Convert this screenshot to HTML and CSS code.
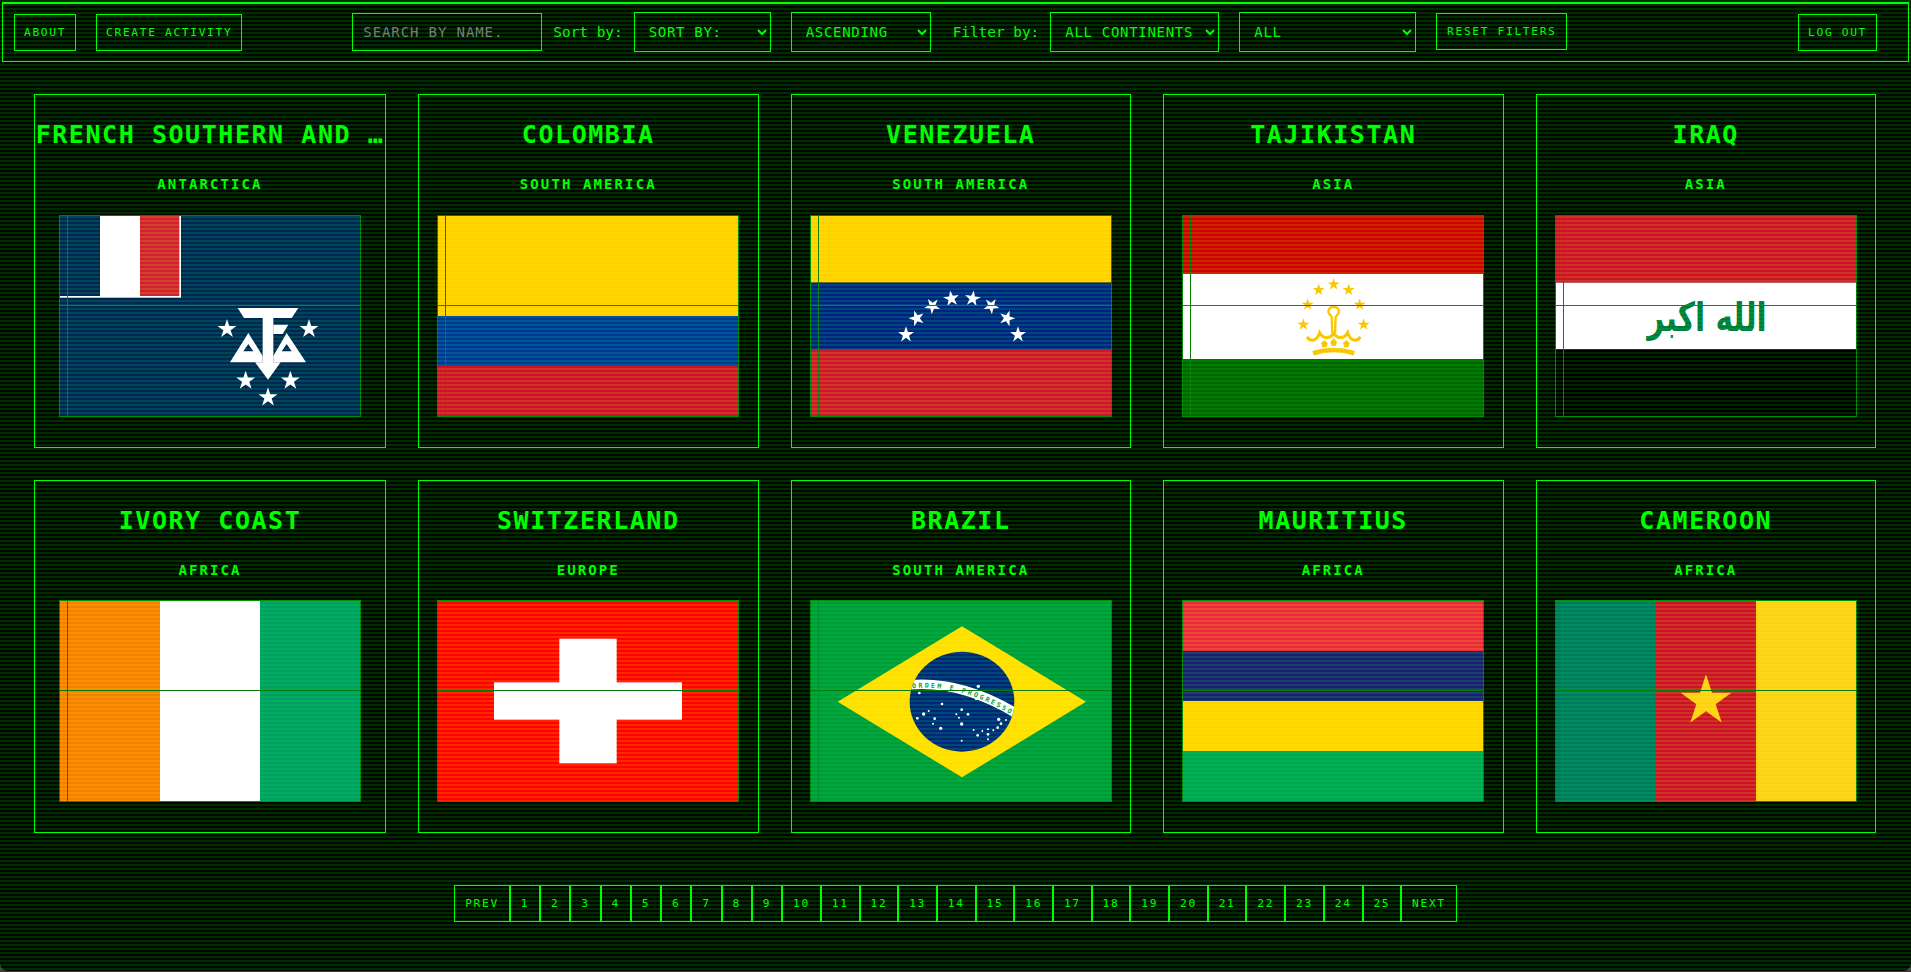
FILE: index.html
```html
<!DOCTYPE html>
<html lang="en">
<head>
<meta charset="utf-8">
<title>Countries</title>
<link rel="stylesheet" href="styles.css">
</head>
<body>
<svg class="defs" width="0" height="0" aria-hidden="true"><defs><polygon id="star" points="0,-1 .225,-.309 .951,-.309 .363,.118 .588,.809 0,.382 -.588,.809 -.363,.118 -.951,-.309 -.225,-.309"/></defs></svg>
<header class="topbar">
  <div class="group group-left">
    <button class="btn btn-nav">ABOUT</button>
    <button class="btn btn-nav">CREATE ACTIVITY</button>
  </div>
  <div class="group group-center">
    <input class="search" type="text" placeholder="SEARCH BY NAME.">
    <label class="lbl">Sort by:</label>
    <select class="sel sel-sort"><option>SORT BY:</option></select>
    <select class="sel sel-order"><option>ASCENDING</option></select>
    <label class="lbl lbl-filter">Filter by:</label>
    <select class="sel sel-cont"><option>ALL CONTINENTS</option></select>
    <select class="sel sel-act"><option>ALL</option></select>
    <button class="btn btn-reset">RESET FILTERS</button>
  </div>
  <button class="btn btn-nav btn-logout">LOG OUT</button>
</header>

<main class="grid">
  <article class="card">
    <h2 class="name">FRENCH SOUTHERN AND …</h2>
    <p class="continent">ANTARCTICA</p>
    <div class="flag"><svg viewBox="0 0 900 600" preserveAspectRatio="none">
      <rect width="900" height="600" fill="#002654"/>
      <rect width="363" height="245" fill="#fff"/>
      <rect width="120" height="240" fill="#002654"/>
      <rect x="120" width="120" height="240" fill="#fff"/>
      <rect x="240" width="118" height="240" fill="#d2202e"/>
      <g fill="#fff">
        <polygon points="533,276 715,276 695,306 552,306"/>
        <rect x="608" y="306" width="32" height="140"/>
        <polygon points="640,326 685,326 668,354 640,354"/>
        <path fill-rule="evenodd" d="M565 351 L510 439 H608 V420 Z M565 384 L550 406 H580 Z"/>
        <path fill-rule="evenodd" d="M680 351 L738 439 H640 V420 Z M680 384 L665 406 H695 Z"/>
        <polygon points="585,439 662,439 624,491"/>
        <use href="#star" transform="translate(501 339) scale(30)"/>
        <use href="#star" transform="translate(747 339) scale(30)"/>
        <use href="#star" transform="translate(557 494) scale(30)"/>
        <use href="#star" transform="translate(691 494) scale(30)"/>
        <use href="#star" transform="translate(624 544) scale(30)"/>
      </g>
    </svg></div>
  </article>

  <article class="card">
    <h2 class="name">COLOMBIA</h2>
    <p class="continent">SOUTH AMERICA</p>
    <div class="flag"><svg viewBox="0 0 900 600" preserveAspectRatio="none">
      <rect width="900" height="300" fill="#ffd100"/>
      <rect y="300" width="900" height="150" fill="#003893"/>
      <rect y="450" width="900" height="150" fill="#ce1126"/>
    </svg></div>
  </article>

  <article class="card">
    <h2 class="name">VENEZUELA</h2>
    <p class="continent">SOUTH AMERICA</p>
    <div class="flag"><svg viewBox="0 0 900 600" preserveAspectRatio="none">
      <rect width="900" height="200" fill="#ffd100"/>
      <rect y="200" width="900" height="200" fill="#00247d"/>
      <rect y="400" width="900" height="200" fill="#cf142b"/>
      <g fill="#fff">
        <use href="#star" transform="translate(285 356) scale(25)"/>
        <use href="#star" transform="translate(317 307) rotate(-18) scale(25)"/>
        <use href="#star" transform="translate(364 270) rotate(-32) scale(25)"/>
        <use href="#star" transform="translate(421 248) rotate(-8) scale(25)"/>
        <use href="#star" transform="translate(485 248) rotate(8) scale(25)"/>
        <use href="#star" transform="translate(541 270) rotate(32) scale(25)"/>
        <use href="#star" transform="translate(588 307) rotate(18) scale(25)"/>
        <use href="#star" transform="translate(621 356) scale(25)"/>
      </g>
    </svg></div>
  </article>

  <article class="card">
    <h2 class="name">TAJIKISTAN</h2>
    <p class="continent">ASIA</p>
    <div class="flag"><svg viewBox="0 0 900 600" preserveAspectRatio="none">
      <rect width="900" height="174" fill="#cc0000"/>
      <rect y="174" width="900" height="256" fill="#fff"/>
      <rect y="430" width="900" height="170" fill="#006600"/>
      <g fill="#f8c300">
        <use href="#star" transform="translate(452 205) scale(19)"/>
        <use href="#star" transform="translate(407 222) scale(19)"/>
        <use href="#star" transform="translate(497 222) scale(19)"/>
        <use href="#star" transform="translate(374 266) scale(19)"/>
        <use href="#star" transform="translate(530 266) scale(19)"/>
        <use href="#star" transform="translate(361 326) scale(19)"/>
        <use href="#star" transform="translate(542 326) scale(19)"/>
        <path d="M414 382 l10 -10 l10 10 l-4 12 h-12 Z"/>
        <path d="M452 366 l10 12 l-4 12 h-12 l-4 -12 Z"/>
        <path d="M480 382 l10 -10 l10 10 l-4 12 h-12 Z"/>
      </g>
      <g fill="none" stroke="#f8c300">
        <path stroke-width="7" d="M436 288 C433 268 471 268 468 288 C466 296 460 298 458 303 L456 354 H448 L446 303 C444 298 438 296 436 288 Z"/>
        <path stroke-width="9" d="M372 362 C384 382 404 372 410 350 C420 368 440 370 452 352 C464 370 484 368 494 350 C500 372 520 382 532 362"/>
        <path stroke-width="14" d="M390 412 Q452 392 514 412"/>
      </g>
    </svg></div>
  </article>

  <article class="card">
    <h2 class="name">IRAQ</h2>
    <p class="continent">ASIA</p>
    <div class="flag"><svg viewBox="0 0 900 600" preserveAspectRatio="none">
      <rect width="900" height="200" fill="#ce1126"/>
      <rect y="200" width="900" height="200" fill="#fff"/>
      <rect y="400" width="900" height="200" fill="#000"/>
      <text class="takbir" x="453" y="344" textLength="358" lengthAdjust="spacingAndGlyphs" text-anchor="middle" direction="rtl">الله اكبر</text>
    </svg></div>
  </article>

  <article class="card">
    <h2 class="name">IVORY COAST</h2>
    <p class="continent">AFRICA</p>
    <div class="flag"><svg viewBox="0 0 900 600" preserveAspectRatio="none">
      <rect width="300" height="600" fill="#f77f00"/>
      <rect x="300" width="300" height="600" fill="#fff"/>
      <rect x="600" width="300" height="600" fill="#009e60"/>
    </svg></div>
  </article>

  <article class="card">
    <h2 class="name">SWITZERLAND</h2>
    <p class="continent">EUROPE</p>
    <div class="flag flag-plain"><svg viewBox="0 0 900 600" preserveAspectRatio="none">
      <rect width="900" height="600" fill="#ff0000"/>
      <rect x="364" y="113" width="172" height="374" fill="#fff"/>
      <rect x="168" y="244" width="564" height="112" fill="#fff"/>
    </svg></div>
  </article>

  <article class="card">
    <h2 class="name">BRAZIL</h2>
    <p class="continent">SOUTH AMERICA</p>
    <div class="flag flag-dim"><svg viewBox="0 0 900 600" preserveAspectRatio="none">
      <defs>
        <clipPath id="globe"><ellipse cx="453" cy="302" rx="157" ry="150"/></clipPath>
        <path id="motto" d="M300 262 Q450 246 612 348"/>
      </defs>
      <rect width="900" height="600" fill="#009b3a"/>
      <polygon points="453,76 825,302 453,529 80,302" fill="#fedf00"/>
      <ellipse cx="453" cy="302" rx="157" ry="150" fill="#002776"/>
      <g clip-path="url(#globe)">
        <path d="M290 252 Q450 236 620 340" fill="none" stroke="#fff" stroke-width="28"/>
      </g>
      <text class="motto"><textPath href="#motto" startOffset="4">ORDEM E PROGRESSO</textPath></text>
      <g fill="#fff">
        <circle cx="502" cy="256" r="5"/><circle cx="325" cy="276" r="4"/><circle cx="495" cy="295" r="3"/>
        <circle cx="393" cy="309" r="4"/><circle cx="452" cy="326" r="4"/><circle cx="338" cy="339" r="5"/>
        <circle cx="353" cy="330" r="3"/><circle cx="319" cy="352" r="4"/><circle cx="371" cy="353" r="4"/>
        <circle cx="436" cy="340" r="3"/><circle cx="471" cy="340" r="4"/><circle cx="444" cy="350" r="3"/>
        <circle cx="366" cy="368" r="3"/><circle cx="452" cy="369" r="5"/><circle cx="389" cy="382" r="5"/>
        <circle cx="488" cy="387" r="3"/><circle cx="514" cy="390" r="3"/><circle cx="531" cy="385" r="3"/>
        <circle cx="547" cy="388" r="3"/><circle cx="560" cy="380" r="4"/><circle cx="563" cy="355" r="5"/>
        <circle cx="585" cy="357" r="3"/><circle cx="570" cy="368" r="4"/><circle cx="500" cy="403" r="4"/>
        <circle cx="531" cy="400" r="4"/><circle cx="531" cy="415" r="3"/><circle cx="452" cy="419" r="3"/>
      </g>
    </svg></div>
  </article>

  <article class="card">
    <h2 class="name">MAURITIUS</h2>
    <p class="continent">AFRICA</p>
    <div class="flag flag-plain"><svg viewBox="0 0 900 600" preserveAspectRatio="none">
      <rect width="900" height="150" fill="#ea2839"/>
      <rect y="150" width="900" height="150" fill="#1a206d"/>
      <rect y="300" width="900" height="150" fill="#ffd500"/>
      <rect y="450" width="900" height="150" fill="#00a551"/>
    </svg></div>
  </article>

  <article class="card">
    <h2 class="name">CAMEROON</h2>
    <p class="continent">AFRICA</p>
    <div class="flag flag-plain"><svg viewBox="0 0 900 600" preserveAspectRatio="none">
      <rect width="300" height="600" fill="#007a5e"/>
      <rect x="300" width="300" height="600" fill="#ce1126"/>
      <rect x="600" width="300" height="600" fill="#fcd116"/>
      <use href="#star" fill="#fcd116" transform="translate(450 300) scale(80)"/>
    </svg></div>
  </article>
</main>

<nav class="pager">
  <button class="page">PREV</button>
  <button class="page">1</button><button class="page">2</button><button class="page">3</button><button class="page">4</button><button class="page">5</button>
  <button class="page">6</button><button class="page">7</button><button class="page">8</button><button class="page">9</button><button class="page">10</button>
  <button class="page">11</button><button class="page">12</button><button class="page">13</button><button class="page">14</button><button class="page">15</button>
  <button class="page">16</button><button class="page">17</button><button class="page">18</button><button class="page">19</button><button class="page">20</button>
  <button class="page">21</button><button class="page">22</button><button class="page">23</button><button class="page">24</button><button class="page">25</button>
  <button class="page">NEXT</button>
</nav>
<div class="scanlines" aria-hidden="true"></div>
</body>
</html>
```

FILE: styles.css
```css
* { box-sizing: border-box; }

html {
  background: #3c3c3c;
  height: 100%;
}

body {
  margin: 0;
  height: 971px;
  overflow: hidden;
  background: #000800;
  color: #00ff00;
  font-family: "DejaVu Sans Mono", "Liberation Mono", monospace;
  border-radius: 0 0 8px 8px;
}

.defs { position: absolute; }

.scanlines {
  position: fixed;
  inset: 0;
  pointer-events: none;
  background: repeating-linear-gradient(180deg, rgba(0, 255, 0, .15) 0 2px, transparent 2px 4px);
  mix-blend-mode: screen;
}

/* top bar */
.topbar {
  display: flex;
  align-items: center;
  height: 60px;
  margin: 2px 2px 0;
  padding: 0 31px 0 11px;
  border: 1px solid #00ff00;
  border-top-width: 2px;
}

.group { display: flex; align-items: center; }
.group-left { gap: 20px; }
.group-center { margin-left: 110px; }

.btn {
  height: 37px;
  padding: 0 9px;
  background: transparent;
  border: 1px solid #00ff00;
  color: #00ff00;
  font: 11.2px "DejaVu Sans Mono", "Liberation Mono", monospace;
  letter-spacing: 1.68px;
  white-space: nowrap;
}

.btn-logout { margin-left: auto; }
.btn-reset { margin: 0 0 2px 20px; width: 131px; padding: 0; }

.search {
  width: 190px;
  height: 38px;
  margin-bottom: 1px;
  padding: 0 10px;
  background: transparent;
  border: 1px solid #00ff00;
  color: #00ff00;
  font: 14px "DejaVu Sans Mono", "Liberation Mono", monospace;
  letter-spacing: .9px;
}

.lbl {
  margin: 0 11px 1px;
  font-size: 14.4px;
  white-space: nowrap;
}

.lbl-filter { margin-left: 22px; }

.sel {
  height: 40px;
  margin-bottom: 1px;
  padding: 0 10px;
  background: transparent;
  border: 1px solid #00ff00;
  border-radius: 0;
  color: #00ff00;
  font: 14px "DejaVu Sans Mono", "Liberation Mono", monospace;
  letter-spacing: .7px;
}

.sel-sort { width: 137px; }
.sel-order { width: 140px; margin-left: 20px; }
.sel-cont { width: 169px; }
.sel-act { width: 177px; margin-left: 20px; }

/* cards */
.grid {
  display: grid;
  grid-template-columns: 352px repeat(4, 1fr);
  gap: 32px;
  padding: 32px 35px 0 34px;
}

.card {
  display: flex;
  flex-direction: column;
  align-items: center;
  height: 353.5px;
  padding-top: 24px;
  border: 1px solid #00ff00;
}

.name {
  margin: 0;
  font-size: 25px;
  line-height: 32px;
  font-weight: 700;
  letter-spacing: 1.55px;
  white-space: nowrap;
}

.continent {
  margin: 25px 0 0;
  font-size: 14px;
  line-height: 16px;
  font-weight: 700;
  letter-spacing: 2.1px;
}

.flag {
  position: relative;
  width: 302px;
  height: 202px;
  margin-top: 22.75px;
  border: 1px solid #008000;
}

.flag svg {
  display: block;
  width: 100%;
  height: 100%;
}

.flag::before,
.flag::after {
  content: "";
  position: absolute;
  background: #0a780a;
}

.flag::before { left: 0; right: 0; top: 89px; height: 1px; }
.flag::after { top: 0; bottom: 0; left: 7px; width: 1px; }
.flag-plain::after { display: none; }
.flag-dim::after { background: #008a2c; }

.takbir {
  fill: #007a3d;
  font-family: "DejaVu Sans", sans-serif;
  font-weight: 700;
  font-size: 120px;
}

.motto {
  fill: #009b3a;
  font-family: "DejaVu Sans Mono", monospace;
  font-weight: 700;
  font-size: 20px;
  letter-spacing: 6.5px;
}

/* pagination */
.pager {
  display: flex;
  justify-content: center;
  margin-top: 52px;
}

.page {
  height: 37px;
  padding: 0 9.93px;
  background: transparent;
  border: 1px solid #00ff00;
  color: #00ff00;
  font: 11.2px "DejaVu Sans Mono", "Liberation Mono", monospace;
  letter-spacing: 1.68px;
}
```
